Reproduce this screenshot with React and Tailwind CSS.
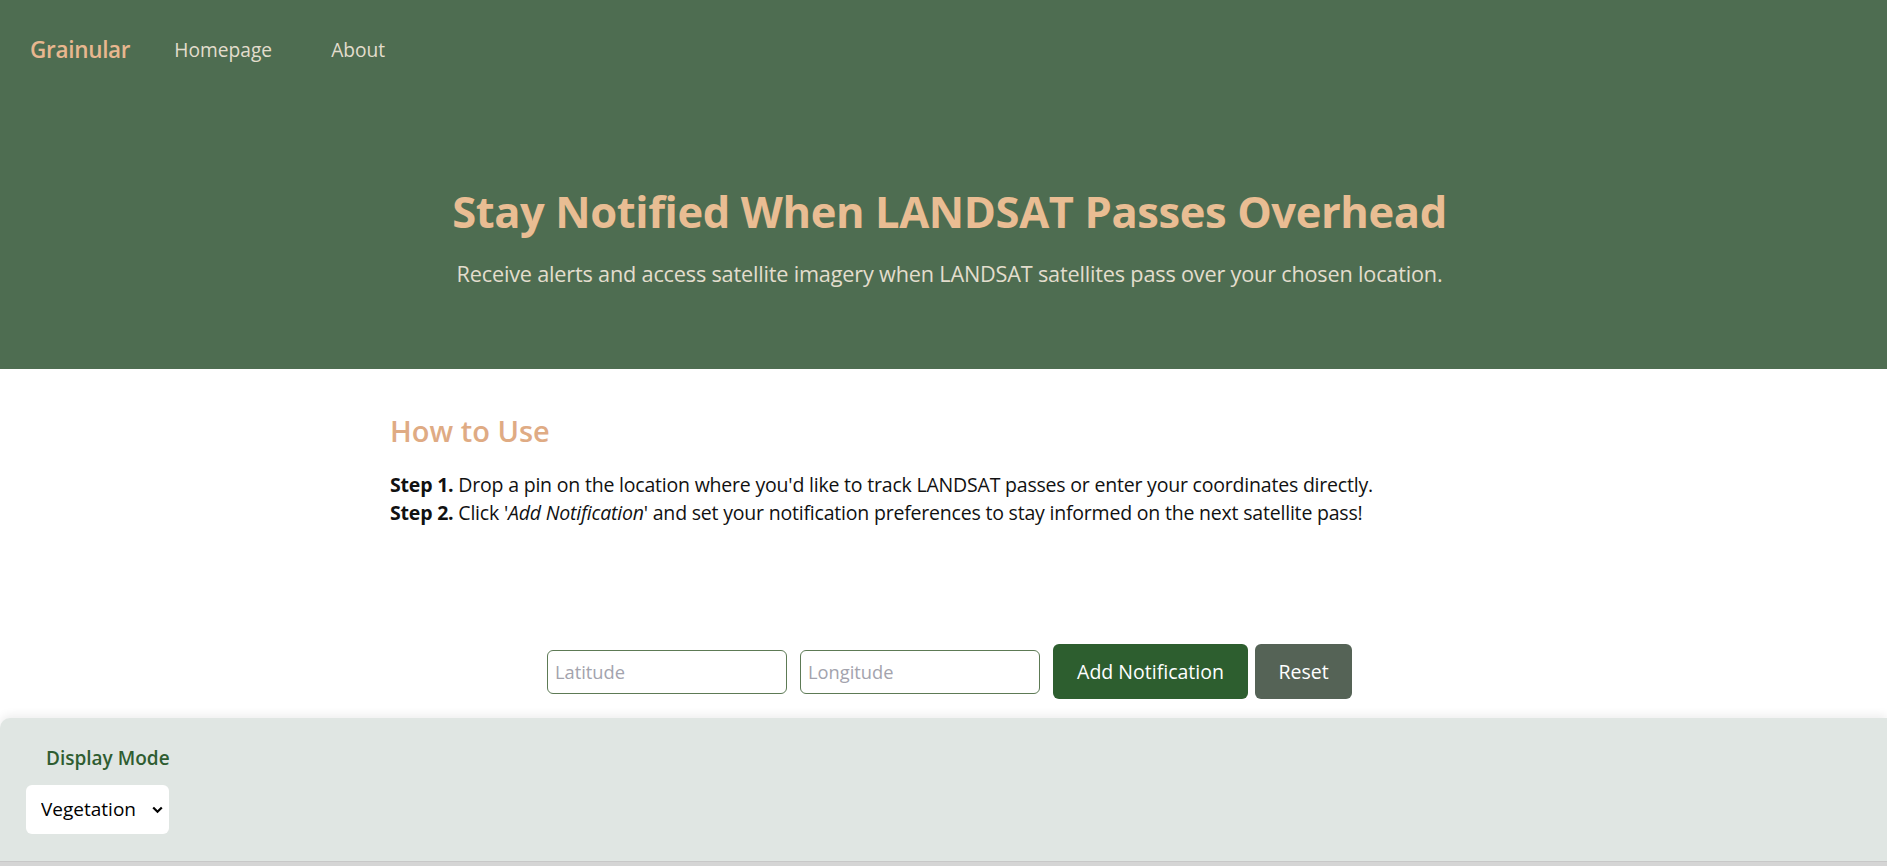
import React, { useState } from "react";

const font = { fontFamily: '"Open Sans", "Noto Sans", sans-serif' };

function NavBar() {
    return (
        <nav className="flex items-center h-[100px] pl-[30px]">
            <a className="text-[22.5px] font-semibold text-[#e8b78f] tracking-[-0.3px]">
                Grainular
            </a>
            <a className="ml-[44px] text-[19.2px] text-[#e3ddcd]">Homepage</a>
            <a className="ml-[59px] text-[19.2px] text-[#e3ddcd]">About</a>
        </nav>
    );
}

function Hero() {
    return (
        <header className="bg-[#4e6d51] h-[369px]">
            <NavBar />
            <div className="flex flex-col items-center pt-[86px] pl-[12px]">
                <h1 className="text-[43.5px] font-bold leading-[52px] text-[#e9bd93] tracking-[-0.4px]">
                    Stay Notified When LANDSAT Passes Overhead
                </h1>
                <p className="mt-[20px] text-[21.7px] text-[#e3ddcd] tracking-[-0.2px]">
                    Receive alerts and access satellite imagery when LANDSAT
                    satellites pass over your chosen location.
                </p>
            </div>
        </header>
    );
}

function HowTo() {
    return (
        <section className="w-[1107px] mx-auto pt-[42px]">
            <h2 className="text-[29px] font-semibold text-[#dfab84] leading-[40px]">
                How to Use
            </h2>
            <div className="mt-[20px] text-[19.5px] leading-[28px] text-[#111] tracking-[-0.2px]">
                <p>
                    <strong>Step 1.</strong> Drop a pin on the location where
                    you'd like to track LANDSAT passes or enter your
                    coordinates directly.
                </p>
                <p>
                    <strong>Step 2.</strong> Click '<em>Add Notification</em>'
                    and set your notification preferences to stay informed on
                    the next satellite pass!
                </p>
            </div>
        </section>
    );
}

function CoordForm() {
    const [lat, setLat] = useState("");
    const [lng, setLng] = useState("");

    return (
        <div className="flex items-center justify-center gap-[7px] pl-[12px] mt-[117px]">
            <input
                value={lat}
                onChange={(e) => setLat(e.target.value)}
                placeholder="Latitude"
                className="w-[240px] h-[44px] border border-[#5d7a55] rounded-[6px] px-[7px] text-[18.3px] placeholder-[#a3a3ad] outline-none"
            />
            <input
                value={lng}
                onChange={(e) => setLng(e.target.value)}
                placeholder="Longitude"
                className="ml-[6px] w-[240px] h-[44px] border border-[#5d7a55] rounded-[6px] px-[7px] text-[18.3px] placeholder-[#a3a3ad] outline-none"
            />
            <button className="ml-[6px] w-[195px] h-[55px] rounded-[6px] bg-[#2d5e2f] text-white text-[19.5px]">
                Add Notification
            </button>
            <button
                onClick={() => {
                    setLat("");
                    setLng("");
                }}
                className="w-[97px] h-[55px] rounded-[6px] bg-[#556356] text-white text-[19.5px]"
            >
                Reset
            </button>
        </div>
    );
}

function DisplayPanel() {
    const [mode, setMode] = useState("vegetation");

    return (
        <div className="mt-[19px] h-[143px] bg-[#e0e6e3] rounded-tl-[10px] shadow-[0_-3px_10px_rgba(0,0,0,0.07)] pt-[26px]">
            <div className="pl-[46px] text-[19px] font-semibold text-[#2f5d31]">
                Display Mode
            </div>
            <div className="relative ml-[26px] mt-[12px] w-[143px] h-[49px]">
                <select
                    value={mode}
                    onChange={(e) => setMode(e.target.value)}
                    className="appearance-none w-full h-full bg-white rounded-[6px] pl-[15px] text-[19px] text-black outline-none"
                >
                    <option value="vegetation">Vegetation</option>
                    <option value="water">Water</option>
                    <option value="urban">Urban</option>
                </select>
                <svg
                    className="absolute right-[6px] top-[21px] pointer-events-none"
                    width="11"
                    height="8"
                    viewBox="0 0 11 8"
                >
                    <path
                        d="M1.2 1.5 L5.5 5.8 L9.8 1.5"
                        fill="none"
                        stroke="#000"
                        strokeWidth="2.2"
                    />
                </svg>
            </div>
        </div>
    );
}

export default function App() {
    return (
        <div className="bg-white min-h-[866px] flex flex-col" style={font}>
            <Hero />
            <HowTo />
            <CoordForm />
            <DisplayPanel />
            <div className="h-[6px] bg-[#d5d5d5] border-t border-[#c8c8c8]" />
        </div>
    );
}
